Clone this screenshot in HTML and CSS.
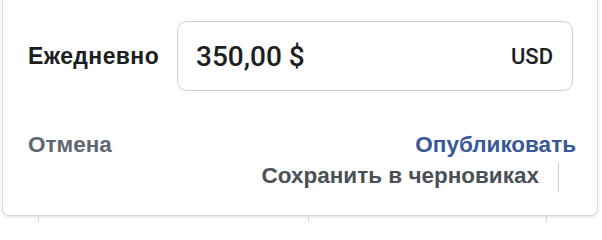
FILE: index.html
```html
<!DOCTYPE html>
<html lang="ru">
<head>
<meta charset="utf-8">
<title>Бюджет</title>
<link rel="stylesheet" href="styles.css">
</head>
<body>
<div class="card">
  <div class="budget-row">
    <div class="label">Ежедневно</div>
    <div class="input">
      <span class="amount">350,00 $</span>
      <span class="currency">USD</span>
    </div>
  </div>
  <div class="actions">
    <span class="cancel">Отмена</span>
    <span class="publish">Опубликовать</span>
  </div>
  <div class="draft-row">
    <span class="draft">Сохранить в черновиках</span>
    <span class="sep"></span>
  </div>
</div>
<div class="table-strip">
  <div class="cell c1"></div>
  <div class="cell c2"></div>
  <div class="cell c3"></div>
  <div class="cell c4"></div>
</div>
</body>
</html>
```
FILE: styles.css
```css
html, body {
  margin: 0;
  padding: 0;
  background: #ffffff;
}
body {
  width: 602px;
  height: 222px;
  overflow: hidden;
  font-family: "Liberation Sans", Arial, sans-serif;
}
.card {
  margin-top: -10px;
  margin-left: 2px;
  width: 596px;
  height: 226px;
  box-sizing: border-box;
  border: 1px solid #d6d9dd;
  border-radius: 0 0 7px 7px;
  background: #ffffff;
  box-shadow: 0 1px 3px rgba(0, 0, 0, 0.12);
  padding: 30px 23px 0 25px;
  position: relative;
  z-index: 1;
}
.budget-row {
  display: flex;
  align-items: center;
}
.label {
  width: 149px;
  flex: none;
  font-size: 23px;
  letter-spacing: 0.4px;
  font-weight: 700;
  color: #1c1e21;
}
.input {
  flex: none;
  width: 396px;
  height: 70px;
  box-sizing: border-box;
  border: 1px solid #ccd0d5;
  border-radius: 10px;
  padding: 0 19px 0 18px;
  display: flex;
  align-items: center;
  justify-content: space-between;
  font-family: Roboto, "Liberation Sans", sans-serif;
  color: #1c1e21;
}
.amount {
  font-size: 28px;
  font-weight: 500;
}
.currency {
  font-size: 22px;
  font-weight: 500;
}
.actions {
  margin-top: 41px;
  display: flex;
  justify-content: space-between;
  font-size: 22.5px;
  line-height: 26px;
  font-weight: 700;
  margin-right: -2px;
}
.cancel {
  color: #606770;
}
.publish {
  color: #385898;
}
.draft-row {
  margin-top: 5px;
  display: flex;
  justify-content: flex-end;
  align-items: flex-start;
  gap: 19px;
  margin-right: 15px;
}
.draft {
  font-size: 22.5px;
  line-height: 26px;
  font-weight: 700;
  color: #4b4f56;
}
.sep {
  width: 1px;
  height: 29px;
  background: #ccd0d5;
}
.table-strip {
  display: flex;
  height: 10px;
  margin-top: -4px;
}
.cell {
  height: 100%;
  border-right: 1px solid #dadde1;
  box-sizing: border-box;
}
.c1 { width: 39px; }
.c2 { width: 270px; }
.c3 { width: 238px; }
.c4 { flex: 1; border-right: none; }
```
